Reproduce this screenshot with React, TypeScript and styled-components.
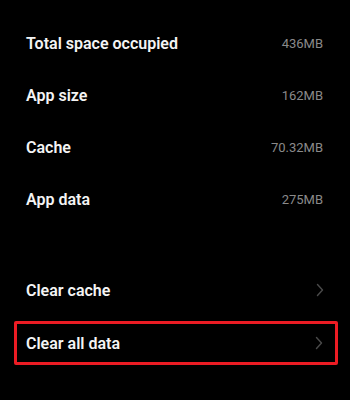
import React from "react";
import styled, { createGlobalStyle } from "styled-components";

const Global = createGlobalStyle`
  html, body { margin: 0; padding: 0; background: #000; }
  body { font-family: Roboto, "Noto Sans", Arial, sans-serif; }
`;

const Screen = styled.div`
  width: 350px;
  height: 400px;
  background: #000;
  padding-top: 17px;
  box-sizing: border-box;
  display: flex;
  flex-direction: column;
`;

const Group = styled.div<{ $gap?: number }>`
  display: flex;
  flex-direction: column;
  margin-top: ${(p) => p.$gap ?? 0}px;
`;

const Row = styled.div<{ $highlight?: boolean }>`
  box-sizing: border-box;
  display: flex;
  align-items: center;
  justify-content: space-between;
  height: ${(p) => (p.$highlight ? 44 : 52)}px;
  padding: ${(p) => (p.$highlight ? "0 13px 0 9px" : "0 27px 0 26px")};
  margin: ${(p) => (p.$highlight ? "5px 12px 3px 14px" : "0")};
  border: ${(p) => (p.$highlight ? "3px solid #ec1c24" : "none")};
  border-radius: ${(p) => (p.$highlight ? "2px" : "0")};
`;

const Label = styled.span`
  color: #f4f4f4;
  font-size: 16px;
  font-weight: 600;
  letter-spacing: 0;
`;

const Value = styled.span`
  color: #8a8a8a;
  font-size: 13px;
  font-weight: 400;
`;

const Chevron = () => (
  <svg width="8" height="14" viewBox="0 0 8 14" fill="none">
    <path d="M1.5 1.5 L6.5 7 L1.5 12.5" stroke="#4a4a4a" strokeWidth="1.4" strokeLinecap="round" strokeLinejoin="round" />
  </svg>
);

const ChevronSlot = styled.span`
  display: flex;
  align-items: center;
  margin-right: -1px;
`;

const storage = [
  { label: "Total space occupied", value: "436MB" },
  { label: "App size", value: "162MB" },
  { label: "Cache", value: "70.32MB" },
  { label: "App data", value: "275MB" },
];

export default function App() {
  return (
    <>
      <Global />
      <Screen>
        <Group>
          {storage.map((s) => (
            <Row key={s.label}>
              <Label>{s.label}</Label>
              <Value>{s.value}</Value>
            </Row>
          ))}
        </Group>
        <Group $gap={39}>
          <Row>
            <Label>Clear cache</Label>
            <ChevronSlot><Chevron /></ChevronSlot>
          </Row>
          <Row $highlight>
            <Label>Clear all data</Label>
            <ChevronSlot><Chevron /></ChevronSlot>
          </Row>
        </Group>
      </Screen>
    </>
  );
}
